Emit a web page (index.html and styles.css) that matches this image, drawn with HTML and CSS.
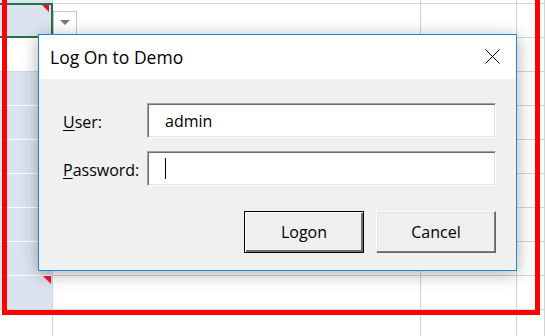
FILE: index.html
```html
<!DOCTYPE html>
<html lang="en">
<head>
<meta charset="UTF-8">
<title>Log On to Demo</title>
<link rel="stylesheet" href="styles.css">
</head>
<body>

<!-- Worksheet grid -->
<div class="sheet">
  <div class="row top"><div class="cell sel"></div><div class="cell"></div><div class="cell"></div><div class="cell"></div></div>
  <div class="row"><div class="cell sel active"><span class="note"></span></div><div class="cell"></div><div class="cell"></div><div class="cell"></div></div>
  <div class="row"><div class="cell"></div><div class="cell"></div><div class="cell"></div><div class="cell"></div></div>
  <div class="row"><div class="cell sel"></div><div class="cell"></div><div class="cell"></div><div class="cell"></div></div>
  <div class="row"><div class="cell sel"></div><div class="cell"></div><div class="cell"></div><div class="cell"></div></div>
  <div class="row"><div class="cell sel"></div><div class="cell"></div><div class="cell"></div><div class="cell"></div></div>
  <div class="row"><div class="cell sel"></div><div class="cell"></div><div class="cell"></div><div class="cell"></div></div>
  <div class="row"><div class="cell sel"></div><div class="cell"></div><div class="cell"></div><div class="cell"></div></div>
  <div class="row"><div class="cell sel"></div><div class="cell"></div><div class="cell"></div><div class="cell"></div></div>
  <div class="row"><div class="cell sel last"><span class="note big"></span></div><div class="cell"></div><div class="cell"></div><div class="cell"></div></div>
  <div class="row"><div class="cell"></div><div class="cell"></div><div class="cell"></div><div class="cell"></div></div>
</div>

<!-- Cell dropdown button -->
<div class="dropdown"><span class="arrow"></span></div>

<!-- Red highlight frame -->
<div class="frame"></div>

<!-- The dialog -->
<div class="dialog">
  <div class="titlebar">
    <span class="title">Log On to Demo</span>
    <svg class="close" width="15" height="15" viewBox="0 0 15 15">
      <path d="M0.5 0.5 L14.5 14.5 M14.5 0.5 L0.5 14.5" stroke="#000" stroke-width="1" fill="none"/>
    </svg>
  </div>
  <div class="dialog-body">
    <div class="fields">
      <label class="label"><u>U</u>ser:</label>
      <div class="textbox">admin</div>
      <label class="label"><u>P</u>assword:</label>
      <div class="textbox"><span class="caret"></span></div>
    </div>
    <div class="buttons">
      <button class="btn default">Logon</button>
      <button class="btn">Cancel</button>
    </div>
  </div>
</div>

</body>
</html>
```

FILE: styles.css
```css
/* Page */
body {
  margin: 0;
  background-color: #fff;
  font-family: "Open Sans", "Noto Sans", sans-serif;
  overflow: hidden;
}

/* Worksheet grid */
.sheet {
  display: flex;
  flex-direction: column;
}

.row {
  display: grid;
  grid-template-columns: 53px 368px 96px 1fr;
  height: 34px;
}

.row.top {
  height: 4px;
}

.cell {
  position: relative;
  box-sizing: border-box;
  border-right: 1px solid #d4d4d4;
  border-bottom: 1px solid #d4d4d4;
}

.cell.sel {
  background-color: #dbe3ee;
  border-bottom-color: #fff;
}

.cell.sel.last {
  border-bottom-color: #d4d4d4;
}

/* Active cell outline */
.cell.active::after {
  content: "";
  position: absolute;
  top: -1px;
  right: -1px;
  bottom: -1px;
  left: -10px;
  border: 2px solid #217346;
}

/* Comment markers */
.note {
  position: absolute;
  top: 1px;
  right: 3px;
  width: 0;
  height: 0;
  border-top: 7px solid #e81123;
  border-left: 7px solid transparent;
  z-index: 1;
}

.note.big {
  top: 0;
  right: 1px;
  border-top-width: 8px;
  border-left-width: 8px;
}

/* Dropdown button */
.dropdown {
  position: absolute;
  left: 53px;
  top: 11px;
  width: 24px;
  height: 24px;
  box-sizing: border-box;
  border: 1px solid #c6c6c6;
  background-color: #fff;
  display: flex;
  align-items: center;
  justify-content: center;
}

.arrow {
  width: 0;
  height: 0;
  border-top: 5px solid #777;
  border-left: 5px solid transparent;
  border-right: 5px solid transparent;
  margin-top: -1px;
}

/* Red frame */
.frame {
  position: absolute;
  left: 2px;
  top: -10px;
  width: 538px;
  height: 325px;
  box-sizing: border-box;
  border: 5px solid #ff0000;
}

/* Dialog */
.dialog {
  position: absolute;
  left: 38px;
  top: 34px;
  width: 479px;
  height: 237px;
  box-sizing: border-box;
  border: 1px solid #1c87d8;
  background-color: #f0f0f0;
  box-shadow: 0 3px 16px rgba(0,0,0,0.32);
  display: flex;
  flex-direction: column;
}

.titlebar {
  height: 44px;
  background-color: #fff;
  display: flex;
  align-items: center;
  justify-content: space-between;
  padding: 0 16px 0 11px;
}

.title {
  font-size: 17.5px;
  color: #000;
  margin-top: -1px;
}

.close {
  display: block;
  margin-top: -1px;
}

.dialog-body {
  padding: 24px 20px 0 24px;
}

.fields {
  display: grid;
  grid-template-columns: 84px 1fr;
  grid-auto-rows: 35px;
  row-gap: 13px;
  align-items: center;
}

.label {
  font-size: 16px;
  color: #000;
  padding-top: 2px;
}

.label u {
  text-underline-offset: 2px;
}

/* Sunken text box */
.textbox {
  height: 35px;
  box-sizing: border-box;
  background-color: #fff;
  border: 1px solid;
  border-color: #a0a0a0 #fff #fff #a0a0a0;
  box-shadow: inset 1px 1px 0 #6d6d6d, inset -1px -1px 0 #e3e3e3;
  padding-left: 17px;
  display: flex;
  align-items: center;
  font-size: 16px;
  color: #000;
}

.caret {
  width: 1px;
  height: 21px;
  background-color: #000;
}

/* Buttons */
.buttons {
  display: flex;
  justify-content: flex-end;
  gap: 12px;
  margin-top: 25px;
}

.btn {
  width: 120px;
  height: 42px;
  box-sizing: border-box;
  background-color: #efefef;
  font-family: "Open Sans", "Noto Sans", sans-serif;
  font-size: 16px;
  color: #000;
  padding: 0;
  border: 1px solid;
  border-color: #fff #696969 #696969 #fff;
  box-shadow: inset -1px -1px 0 #7a7a7a, inset 1px 1px 0 #e3e3e3;
}

.btn.default {
  border-color: #000;
  box-shadow: inset 1px 1px 0 #fff, inset -2px -2px 0 #6d6d6d;
}
```
